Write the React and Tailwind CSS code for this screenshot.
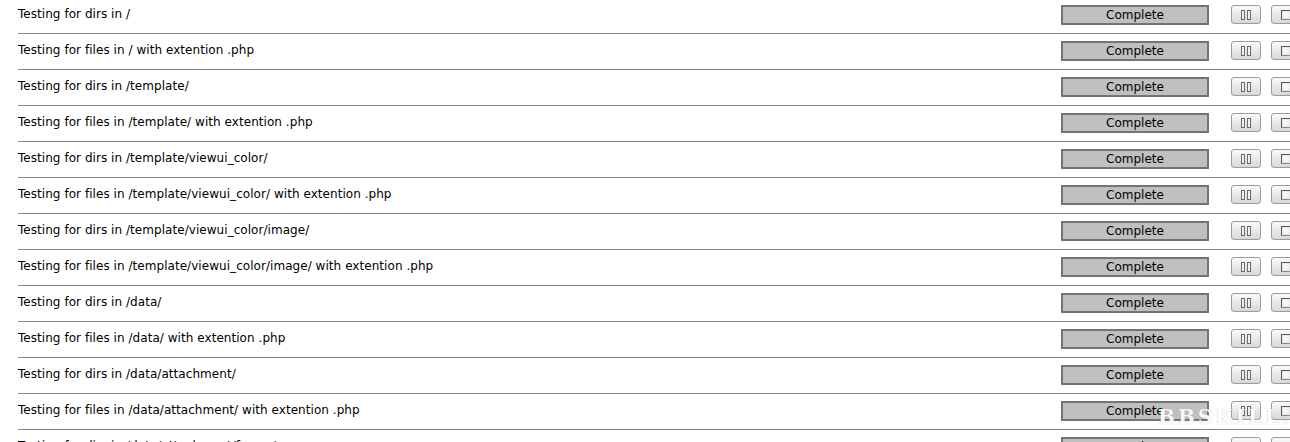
import React from "react";

const rows = [
  "Testing for dirs in /",
  "Testing for files in / with extention .php",
  "Testing for dirs in /template/",
  "Testing for files in /template/ with extention .php",
  "Testing for dirs in /template/viewui_color/",
  "Testing for files in /template/viewui_color/ with extention .php",
  "Testing for dirs in /template/viewui_color/image/",
  "Testing for files in /template/viewui_color/image/ with extention .php",
  "Testing for dirs in /data/",
  "Testing for files in /data/ with extention .php",
  "Testing for dirs in /data/attachment/",
  "Testing for files in /data/attachment/ with extention .php",
  "Testing for dirs in /data/attachment/forum/",
];

function PauseIcon() {
  return (
    <svg width="12" height="12" viewBox="0 0 12 12">
      <rect x="1.5" y="1.5" width="3" height="9" fill="#f0f0f0" stroke="#6a6a6a" strokeWidth="1" />
      <rect x="7.5" y="1.5" width="3" height="9" fill="#f0f0f0" stroke="#6a6a6a" strokeWidth="1" />
    </svg>
  );
}

function StopIcon() {
  return (
    <svg width="12" height="12" viewBox="0 0 12 12">
      <rect x="1.5" y="1.5" width="9" height="9" fill="#e6e6e6" stroke="#8a8a8a" strokeWidth="1" />
      <path d="M1.5 10.5 V1.5 H10.5" fill="none" stroke="#5a5a5a" strokeWidth="1" />
      <rect x="3" y="3" width="6" height="6" fill="#f6f6f6" />
    </svg>
  );
}

function Btn({ children }) {
  return (
    <div className="w-[30px] h-[19px] shrink-0 flex items-center justify-center rounded-[3px] border border-[#9c9c9c] bg-gradient-to-b from-[#fafafa] to-[#d8d8d8]">
      {children}
    </div>
  );
}

export default function App() {
  return (
    <div
      className="relative w-[1290px] h-[442px] overflow-hidden bg-white text-[12px] text-black"
      style={{ fontFamily: '"DejaVu Sans", sans-serif' }}
    >
      <div className="-mt-[2px]">
        {rows.map((t, i) => (
          <div
            key={i}
            className="ml-[18px] h-[36px] border-b border-[#8a8a8a] flex items-center"
          >
            <div className="w-[1043px] shrink-0 leading-[14px] -mt-[4px] tracking-[0.05px]">{t}</div>
            <div className="w-[148px] h-[20px] shrink-0 border-2 border-[#747474] bg-[#c0c0c0] flex items-center justify-center leading-none -mt-[1px]">
              Complete
            </div>
            <div className="ml-[22px] -mt-[2px]">
              <Btn>
                <PauseIcon />
              </Btn>
            </div>
            <div className="ml-[10px] -mt-[2px]">
              <Btn>
                <StopIcon />
              </Btn>
            </div>
          </div>
        ))}
      </div>
      <div
        className="absolute left-[1158px] top-[407px] text-white font-bold text-[20px] tracking-[3px] leading-none opacity-90"
        style={{ fontFamily: '"DejaVu Serif", serif', textShadow: "0 0 1px rgba(120,120,120,0.6)" }}
      >
        BBSKILL.CN
      </div>
    </div>
  );
}
